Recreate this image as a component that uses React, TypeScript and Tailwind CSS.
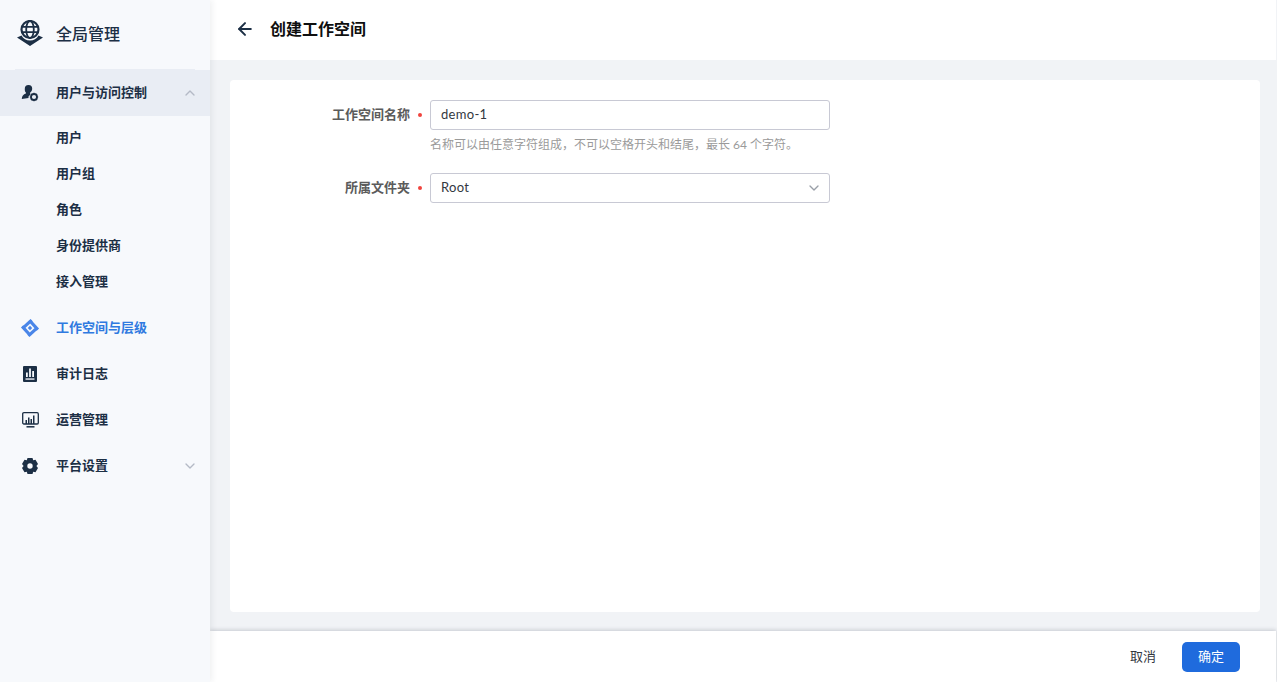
import { ArrowLeft, ChevronDown, ChevronUp } from 'lucide-react'

const font = { fontFamily: '"Lato", "Noto Sans CJK SC", sans-serif' }

function GlobeLogo() {
  return (
    <svg width="26" height="28" viewBox="0 0 26 28" fill="none">
      <circle cx="13" cy="9.500" r="8.500" stroke="#1c2f45" strokeWidth="2.200" />
      <ellipse cx="13" cy="9.500" rx="3.800" ry="8.500" stroke="#1c2f45" strokeWidth="1.800" />
      <path d="M4.500 6.800h17M4.500 12.200h17" stroke="#1c2f45" strokeWidth="1.800" />
      <path d="M0 17.500 4.500 15.500c1.800 3.500 4.800 5 8.500 5s6.700-1.500 8.500-5l4.500 2L13 26z" fill="#1c2f45" />
    </svg>
  )
}

function UserGear() {
  return (
    <svg width="18" height="18" viewBox="0 0 18 18" fill="none">
      <path d="M7.500 1a3.700 3.700 0 0 1 3.700 3.800c0 1.500-.8 3-2 3.700v2.300L7.500 12.500v1.500L.8 15c0-2.800 1.600-4.800 4.100-5.400V8.400C3.700 7.700 3.800 6.300 3.800 4.800A3.700 3.700 0 0 1 7.500 1z" fill="#1c2f45" />
      <circle cx="13" cy="13" r="3" stroke="#1c2f45" strokeWidth="1.800" />
      <path d="M13 8.800v1M13 16.200v1M8.800 13h1M16.200 13h1M10 10l.8.800M15.200 15.200l.8.800M16 10l-.8.800M10.800 15.200l-.8.800" stroke="#1c2f45" strokeWidth="1.100" />
    </svg>
  )
}

function DiamondIcon() {
  const bar = 'M9.500 0 0.500 8.200 2.700 10.400 11.700 2.200z'
  return (
    <svg width="18" height="18" viewBox="0 0 18 18" fill="#4a86e8">
      <path d={bar} />
      <path d={bar} transform="rotate(90 9 9)" />
      <path d={bar} transform="rotate(180 9 9)" />
      <path d={bar} transform="rotate(270 9 9)" />
      <path d="M9 6.800 11.200 9 9 11.200 6.800 9z" />
    </svg>
  )
}

function AuditIcon() {
  return (
    <svg width="14" height="16" viewBox="0 0 14 16">
      <rect width="14" height="16" rx="1" fill="#1c2f45" />
      <path d="M3 6.500h1.800V11H3zM6.100 2.500h1.800V11H6.100zM9.200 5h1.800v6H9.200z" fill="#f7f9fc" />
      <path d="M2.500 12.300h9v1.500h-9z" fill="#dfe3ea" />
    </svg>
  )
}

function MonitorIcon() {
  return (
    <svg width="17" height="16" viewBox="0 0 17 16" fill="none">
      <rect x="0.700" y="0.700" width="15.600" height="11.300" rx="1.200" stroke="#1c2f45" strokeWidth="1.300" />
      <path d="M3.500 8h1.500v4H3.500zM6 5.500h1.500V12H6zM8.500 7h1.500v5H8.500zM11 3.500h1.500V12H11z" fill="#1c2f45" />
      <path d="M4.500 14.800h8" stroke="#1c2f45" strokeWidth="1.500" />
    </svg>
  )
}

function GearIcon() {
  return (
    <svg width="16" height="16" viewBox="0 0 16 16">
      <path
        fillRule="evenodd"
        d="M5.500 0h5l.7 2.300 2.300-.6L16 6l-1.600 2 1.600 2-2.500 4.300-2.300-.6L10.500 16h-5l-.7-2.300-2.300.6L0 10l1.600-2L0 6l2.500-4.300 2.300.6zM8 5.300a2.700 2.700 0 1 0 0 5.400 2.700 2.700 0 0 0 0-5.400z"
        fill="#1c2f45"
      />
    </svg>
  )
}

function NavItem({
  icon,
  label,
  active,
  open,
  chevron,
}: {
  icon: React.ReactNode
  label: string
  active?: boolean
  open?: boolean
  chevron?: 'up' | 'down'
}) {
  return (
    <div className={`flex h-[46px] items-center pl-[21px] pr-[12px] ${open ? 'bg-[#e9edf4]' : ''}`}>
      <span className="flex w-[18px] justify-center">{icon}</span>
      <span className={`ml-[17px] flex-1 text-[13px] font-bold ${active ? 'text-[#2f7ae0]' : 'text-[#1c2f45]'}`}>
        {label}
      </span>
      {chevron === 'up' && <ChevronUp size={16} className="text-[#b4bac6]" />}
      {chevron === 'down' && <ChevronDown size={16} className="text-[#b4bac6]" />}
    </div>
  )
}

function SubItem({ label }: { label: string }) {
  return <div className="flex h-9 items-center pl-14 text-[13px] font-bold text-[#1c2f45]">{label}</div>
}

function Field({ label, children }: { label: string; children: React.ReactNode }) {
  return (
    <div className="flex">
      <div className="flex h-[30px] w-[200px] items-center justify-end">
        <span className="text-[13px] font-bold text-[#5b5b5b]">{label}</span>
        <span className="ml-[8px] mr-[8px] h-[4px] w-[4px] rounded-full bg-[#f0443e]" />
      </div>
      <div className="w-[400px]">{children}</div>
    </div>
  )
}

export default function App() {
  return (
    <div className="flex h-[682px] w-[1277px] overflow-hidden bg-[#f1f3f6]" style={font}>
      {/* Sidebar */}
      <aside className="z-10 h-full w-[210px] shrink-0 bg-[#f7f9fc] shadow-[2px_0_6px_rgba(30,40,60,0.07)]">
        <div className="flex h-[69px] items-center pb-[2px] pl-[17px]">
          <GlobeLogo />
          <span className="ml-[13px] text-base font-medium text-[#1c2f45]">全局管理</span>
        </div>
        <div className="mx-[15px] h-px bg-[#e9edf4]" />
        <NavItem icon={<UserGear />} label="用户与访问控制" open chevron="up" />
        <div className="pb-[5px] pt-[4px]">
          <SubItem label="用户" />
          <SubItem label="用户组" />
          <SubItem label="角色" />
          <SubItem label="身份提供商" />
          <SubItem label="接入管理" />
        </div>
        <NavItem icon={<DiamondIcon />} label="工作空间与层级" active />
        <NavItem icon={<AuditIcon />} label="审计日志" />
        <NavItem icon={<MonitorIcon />} label="运营管理" />
        <NavItem icon={<GearIcon />} label="平台设置" chevron="down" />
      </aside>

      {/* Main */}
      <div className="flex h-full min-w-0 flex-1 flex-col border-r border-[#f1f3f6]">
        <header className="flex h-[60px] shrink-0 items-center bg-white pb-[2px] pl-[25px]">
          <ArrowLeft size={20} strokeWidth={2.4} className="text-[#1c2f45]" />
          <h1 className="ml-[15px] text-base font-bold text-[#0f0f0f]">创建工作空间</h1>
        </header>

        <main className="min-h-0 flex-1 pb-[18px] pl-5 pr-4 pt-5">
          <div className="h-[532px] rounded bg-white pt-5">
            <Field label="工作空间名称">
              <div className="flex h-[30px] items-center rounded-[3px] border border-[#c8c9d4] px-[10px] text-[13px] tracking-[0.3px] text-[#33383f]">
                demo-1
              </div>
              <p className="mt-[6px] text-xs leading-[18px] text-[#9a9a9a]">
                名称可以由任意字符组成，不可以空格开头和结尾，最长 64 个字符。
              </p>
            </Field>
            <div className="mt-[19px]">
              <Field label="所属文件夹">
                <div className="flex h-[30px] items-center justify-between rounded-[3px] border border-[#c8c9d4] pl-[10px] pr-[7px] text-[13px] tracking-[0.3px] text-[#33383f]">
                  Root
                  <ChevronDown size={16} className="text-[#9a9fa8]" />
                </div>
              </Field>
            </div>
          </div>
        </main>

        <footer className="flex h-[51px] shrink-0 items-center justify-end bg-white pr-[36px] shadow-[0_-1px_4px_rgba(30,40,60,0.2)]">
          <span className="text-[13px] text-[#33383f]">取消</span>
          <button className="ml-[26px] h-[30px] w-[58px] rounded-[5px] bg-[#1f6bdd] text-[13px] text-white">确定</button>
        </footer>
      </div>
    </div>
  )
}
